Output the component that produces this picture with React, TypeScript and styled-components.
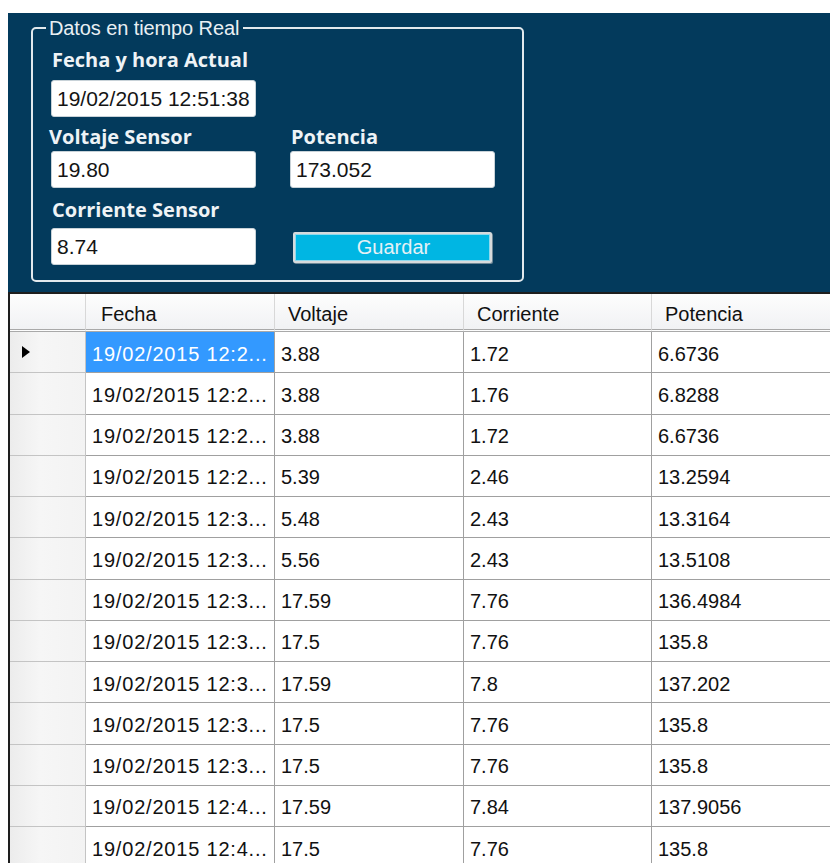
import React from "react";
import styled, { createGlobalStyle } from "styled-components";

const GlobalStyle = createGlobalStyle`
  html, body {
    margin: 0;
    padding: 0;
    background: #ffffff;
  }
  body {
    font-family: "Liberation Sans", Arial, sans-serif;
    overflow: hidden;
  }
`;

interface Lectura {
  fecha: string;
  voltaje: string;
  corriente: string;
  potencia: string;
}

const lecturas: Lectura[] = [
  { fecha: "19/02/2015 12:2...", voltaje: "3.88", corriente: "1.72", potencia: "6.6736" },
  { fecha: "19/02/2015 12:2...", voltaje: "3.88", corriente: "1.76", potencia: "6.8288" },
  { fecha: "19/02/2015 12:2...", voltaje: "3.88", corriente: "1.72", potencia: "6.6736" },
  { fecha: "19/02/2015 12:2...", voltaje: "5.39", corriente: "2.46", potencia: "13.2594" },
  { fecha: "19/02/2015 12:3...", voltaje: "5.48", corriente: "2.43", potencia: "13.3164" },
  { fecha: "19/02/2015 12:3...", voltaje: "5.56", corriente: "2.43", potencia: "13.5108" },
  { fecha: "19/02/2015 12:3...", voltaje: "17.59", corriente: "7.76", potencia: "136.4984" },
  { fecha: "19/02/2015 12:3...", voltaje: "17.5", corriente: "7.76", potencia: "135.8" },
  { fecha: "19/02/2015 12:3...", voltaje: "17.59", corriente: "7.8", potencia: "137.202" },
  { fecha: "19/02/2015 12:3...", voltaje: "17.5", corriente: "7.76", potencia: "135.8" },
  { fecha: "19/02/2015 12:3...", voltaje: "17.5", corriente: "7.76", potencia: "135.8" },
  { fecha: "19/02/2015 12:4...", voltaje: "17.59", corriente: "7.84", potencia: "137.9056" },
  { fecha: "19/02/2015 12:4...", voltaje: "17.5", corriente: "7.76", potencia: "135.8" },
];

const columnas = ["Fecha", "Voltaje", "Corriente", "Potencia"];

export default function App() {
  return (
    <Window>
      <GlobalStyle />
      <Panel>
        <GroupBox>
          <Legend>Datos en tiempo Real</Legend>
          <Form>
            <Field $col={1}>
              <Label>Fecha y hora Actual</Label>
              <Input $gap={8} readOnly value="19/02/2015 12:51:38" />
            </Field>
            <Field $col={1} $top={8}>
              <Label $shift={-3}>Voltaje Sensor</Label>
              <Input $gap={2} readOnly value="19.80" />
            </Field>
            <Field $col={2} $top={8}>
              <Label>Potencia</Label>
              <Input $gap={2} readOnly value="173.052" />
            </Field>
            <Field $col={1} $top={10}>
              <Label>Corriente Sensor</Label>
              <Input $gap={6} readOnly value="8.74" />
            </Field>
            <Field $col={2} $top={10}>
              <SaveButton>Guardar</SaveButton>
            </Field>
          </Form>
        </GroupBox>
      </Panel>
      <Grid>
        <HeaderCell />
        {columnas.map((c) => (
          <HeaderCell key={c} $pad={c === "Fecha" ? 15 : 13}>
            {c}
          </HeaderCell>
        ))}
        {lecturas.map((l, i) => (
          <React.Fragment key={i}>
            <RowHeader>{i === 0 && <Arrow />}</RowHeader>
            <Cell $selected={i === 0} $spacing={0.8}>
              {l.fecha}
            </Cell>
            <Cell>{l.voltaje}</Cell>
            <Cell>{l.corriente}</Cell>
            <Cell>{l.potencia}</Cell>
          </React.Fragment>
        ))}
      </Grid>
    </Window>
  );
}

const Window = styled.div`
  width: 830px;
  height: 863px;
  padding: 13px 0 0 8px;
  box-sizing: border-box;
  overflow: hidden;
  display: flex;
  flex-direction: column;
`;

const Panel = styled.div`
  flex-shrink: 0;
  height: 279px;
  box-sizing: border-box;
  padding: 4px 0 0 23px;
  background: #033a5c;
`;

const GroupBox = styled.fieldset`
  width: 493px;
  box-sizing: border-box;
  margin: 0;
  padding: 9px 0 15px 18px;
  border: 2px solid #e2e9ed;
  border-radius: 5px;
`;

const Legend = styled.legend`
  margin-left: -5px;
  padding: 0 4px 0 3px;
  line-height: 22px;
  font-size: 20px;
  color: #e9eff3;
  letter-spacing: -0.1px;
`;

const Form = styled.div`
  display: grid;
  grid-template-columns: 205px 205px;
  column-gap: 34px;
`;

const Field = styled.div<{ $col: number; $top?: number }>`
  grid-column: ${(p) => p.$col};
  margin-top: ${(p) => p.$top ?? 0}px;
  display: flex;
  flex-direction: column;
  justify-content: flex-end;
`;

const Label = styled.div<{ $shift?: number }>`
  margin-left: ${(p) => 1 + (p.$shift ?? 0)}px;
  height: 24px;
  line-height: 24px;
  font-family: "Open Sans", "Noto Sans", sans-serif;
  font-weight: 700;
  font-size: 20px;
  color: #eef3f6;
  white-space: nowrap;
`;

const Input = styled.input<{ $gap: number }>`
  margin-top: ${(p) => p.$gap}px;
  width: 205px;
  height: 37px;
  box-sizing: border-box;
  padding: 0 5px;
  border: 1px solid #c8d2d8;
  border-radius: 3px;
  background: #ffffff;
  font-family: "Liberation Sans", Arial, sans-serif;
  font-size: 21px;
  color: #141414;
  outline: none;
`;

const SaveButton = styled.button`
  margin: 0 0 2px 3px;
  width: 199px;
  height: 31px;
  box-sizing: border-box;
  padding: 0 0 0 2px;
  border: 2px solid #d6dadc;
  border-radius: 2px;
  background: #00b6e3;
  box-shadow: inset 0 0 0 1px #8fd9ee, 1px 1px 0 #6e8796;
  font-family: "Liberation Sans", Arial, sans-serif;
  font-size: 20px;
  line-height: 27px;
  color: #e6f1f6;
`;

const Grid = styled.div`
  display: grid;
  grid-template-columns: 76px 189px 189px 188px 240px;
  grid-template-rows: 38px;
  grid-auto-rows: 41.25px;
  width: max-content;
  border-left: 2px solid #1e1e1e;
  border-top: 2px solid #1e1e1e;
  background: #ffffff;
  font-size: 20px;
  color: #111111;
`;

const HeaderCell = styled.div<{ $pad?: number }>`
  display: flex;
  align-items: center;
  box-sizing: border-box;
  padding: 6px 0 0 ${(p) => p.$pad ?? 0}px;
  background: linear-gradient(#fdfdfd, #f1f2f4);
  border-right: 1px solid #d8d8d8;
  border-bottom: 3px double #a9a9a9;
  white-space: nowrap;
`;

const RowHeader = styled.div`
  display: flex;
  align-items: center;
  box-sizing: border-box;
  padding-left: 12px;
  background: linear-gradient(to right, #ececec, #f6f6f6 40%, #f3f3f3);
  border-right: 1px solid #c4c4c4;
  border-bottom: 1px solid #c4c4c4;
`;

const Arrow = styled.span`
  width: 0;
  height: 0;
  border-top: 6px solid transparent;
  border-bottom: 6px solid transparent;
  border-left: 8px solid #000000;
`;

const Cell = styled.div<{ $selected?: boolean; $spacing?: number }>`
  display: flex;
  align-items: center;
  box-sizing: border-box;
  padding: 4px 0 0 6px;
  overflow: hidden;
  white-space: nowrap;
  letter-spacing: ${(p) => p.$spacing ?? 0}px;
  background: ${(p) => (p.$selected ? "#3399ff" : "#ffffff")};
  color: ${(p) => (p.$selected ? "#ffffff" : "#111111")};
  border-right: 1px solid #a0a0a0;
  border-bottom: 1px solid #a0a0a0;
`;
